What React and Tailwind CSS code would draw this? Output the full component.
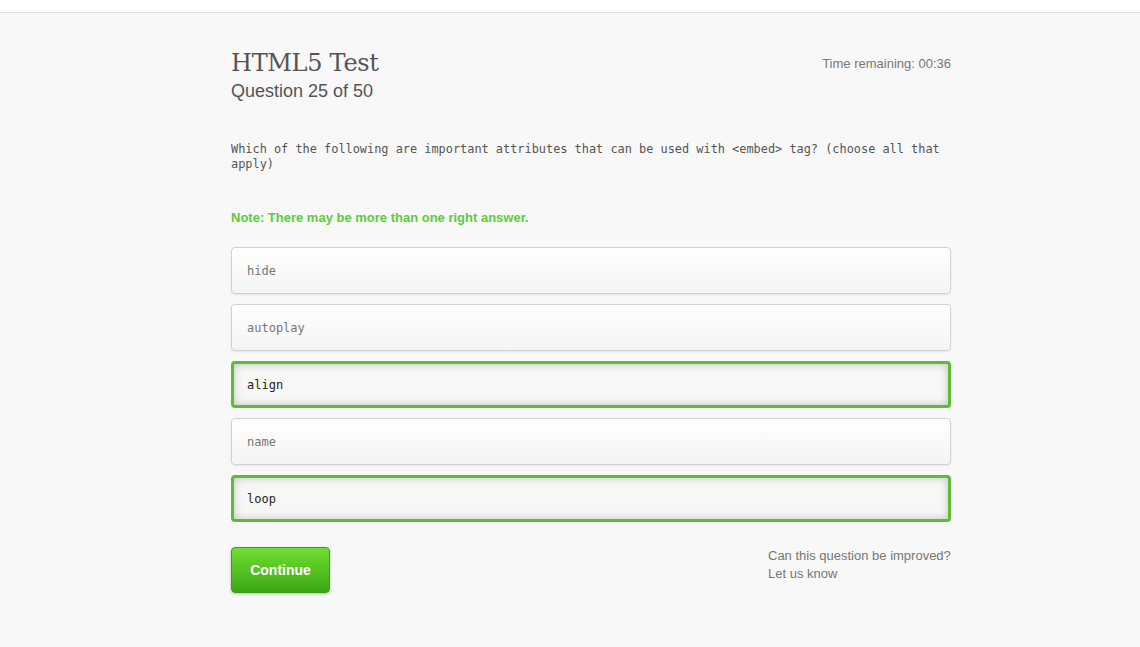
export default function App() {
  const options = [
    { t: "hide", sel: false },
    { t: "autoplay", sel: false },
    { t: "align", sel: true },
    { t: "name", sel: false },
    { t: "loop", sel: true },
  ];
  return (
    <div className="min-h-[647px] bg-[#f8f8f8] font-['Liberation_Sans',Arial,sans-serif]">
      <div className="h-[13px] bg-white border-b border-[#dddddd]" />
      <div className="w-[720px] ml-[231px] pt-[35px]">
        <div className="flex justify-between items-start">
          <div>
            <h1 className="font-['DejaVu_Serif',serif] text-[24px] leading-[30px] text-[#555555] tracking-[-0.3px]">HTML5 Test</h1>
            <div className="text-[18px] leading-[22px] text-[#555555] mt-[2px]">Question 25 of 50</div>
          </div>
          <div className="text-[13px] leading-[16px] text-[#777777] mt-[8px]">Time remaining: 00:36</div>
        </div>
        <p className="mt-[40px] font-['DejaVu_Sans_Mono',monospace] text-[11.9px] leading-[15px] text-[#555555]">
          Which of the following are important attributes that can be used with &lt;embed&gt; tag? (choose all that apply)
        </p>
        <div className="mt-[38px] text-[13px] leading-[16px] font-bold text-[#5ccc3a]">Note: There may be more than one right answer.</div>
        <div className="mt-[21px] flex flex-col gap-[10px]">
          {options.map((o) =>
            o.sel ? (
              <div key={o.t} className="h-[47px] rounded-[4px] border-[3px] border-[#5bbd30] bg-[#f7f7f5] shadow-[inset_0_0_8px_rgba(0,0,0,0.22)] flex items-center pl-[13px] font-['DejaVu_Sans_Mono',monospace] text-[12px] text-[#222222]">
                {o.t}
              </div>
            ) : (
              <div key={o.t} className="h-[47px] rounded-[4px] border border-[#d0d0dc] bg-gradient-to-b from-white to-[#f4f4f2] shadow-[0_1px_2px_rgba(0,0,0,0.08)] flex items-center pl-[15px] font-['DejaVu_Sans_Mono',monospace] text-[12px] text-[#777777]">
                {o.t}
              </div>
            )
          )}
        </div>
        <div className="mt-[25px] flex justify-between items-start">
          <button className="w-[99px] h-[46px] rounded-[4px] border border-[#3d9c1c] bg-gradient-to-b from-[#70de30] to-[#3aa714] text-white font-bold text-[14px] shadow-[0_1px_3px_rgba(0,0,0,0.25)]">
            Continue
          </button>
          <div className="text-[13px] leading-[18px] text-[#777777] w-[183px]">
            <div>Can this question be improved?</div>
            <div>Let us know</div>
          </div>
        </div>
      </div>
    </div>
  );
}
